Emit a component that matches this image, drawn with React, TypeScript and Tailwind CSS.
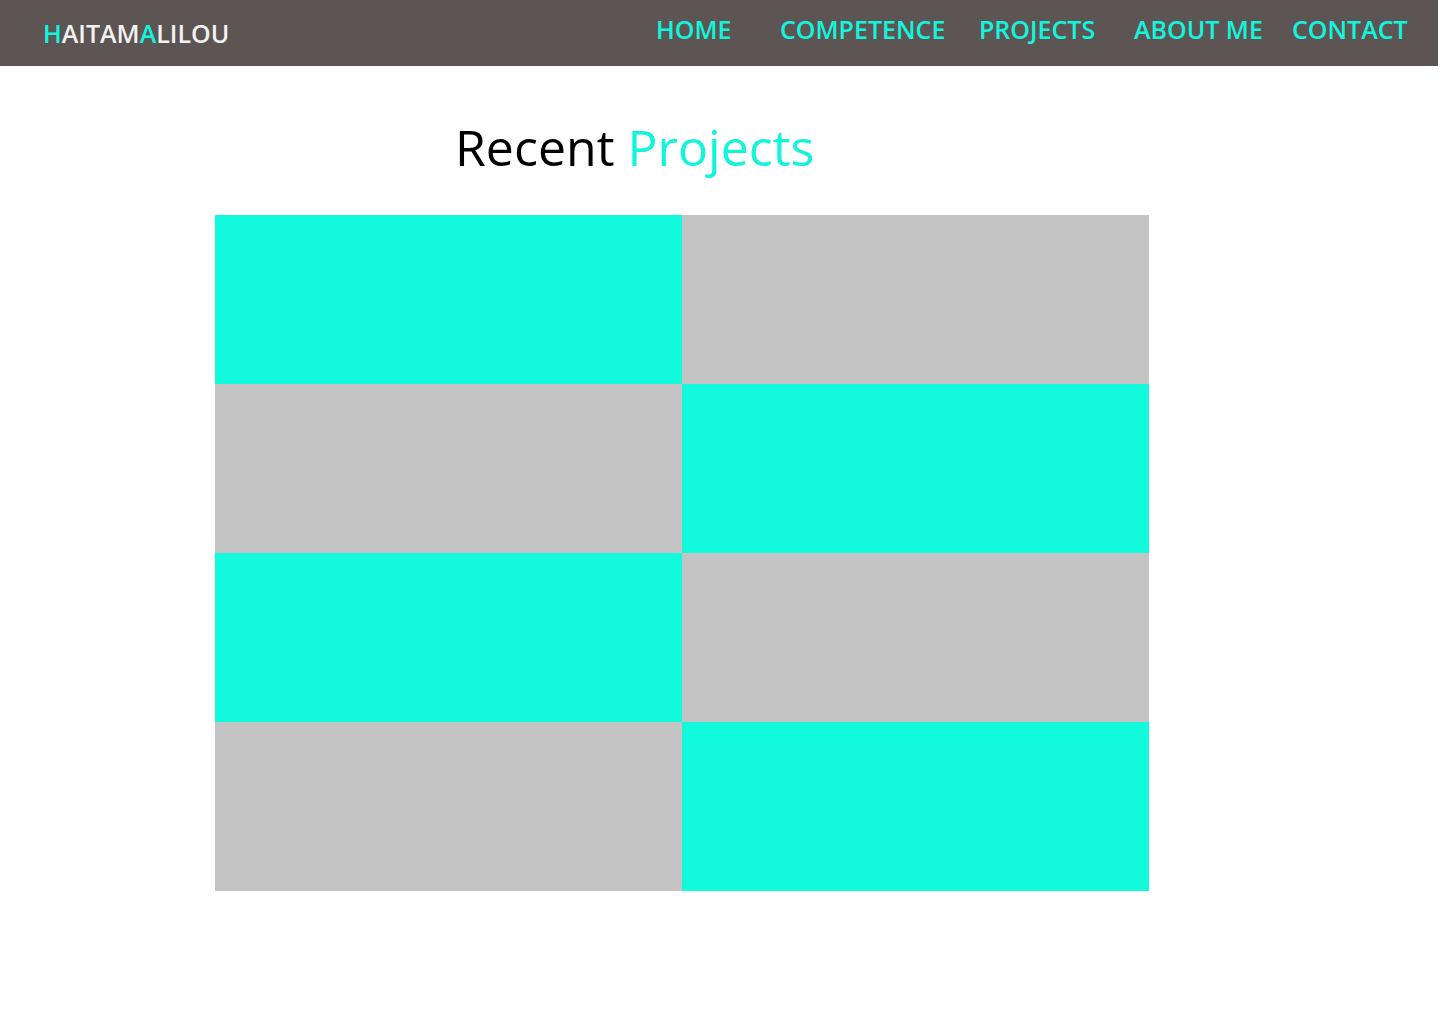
import React from 'react';

const links = [{
  name: 'HOME',
  width: 'w-[124px]'
}, {
  name: 'COMPETENCE',
  width: 'w-[199px]'
}, {
  name: 'PROJECTS',
  width: 'w-[155px]'
}, {
  name: 'ABOUT ME',
  width: 'w-[158px]'
}, {
  name: 'CONTACT',
  width: 'w-[116px]'
}];

const tiles = ['cyan', 'gray', 'gray', 'cyan', 'cyan', 'gray', 'gray', 'cyan'];

export default function App() {
  return <div className="min-h-[1024px] bg-white font-['Open_Sans',sans-serif]">
      <nav className="w-[1438px] h-[66px] bg-[#5d5554] flex items-start justify-between pl-[43px] pr-[30px]">
        <div className="pt-[16px] text-[25px] leading-[34px] font-semibold text-[#f2f2f2]">
          <span className="text-[#13f4dc]">H</span>AITAM<span className="text-[#13f4dc]">A</span>LILOU
        </div>
        <ul className="flex pt-[12px]">
          {links.map(link => <li key={link.name} className={`${link.width} text-[25px] leading-[34px] font-semibold text-[#13f4dc]`}>
              {link.name}
            </li>)}
        </ul>
      </nav>

      <section className="pt-[56px]">
        <h1 className="pl-[455px] text-[50px] leading-none font-normal text-black">
          Recent <span className="text-[#13f4dc]">Projects</span>
        </h1>
        <div className="ml-[215px] mt-[43px] w-[934px] grid grid-cols-2">
          {tiles.map((t, i) => <div key={i} className={`h-[169px] ${t === 'cyan' ? 'bg-[#13f9dc]' : 'bg-[#c4c4c4]'}`} />)}
        </div>
      </section>
    </div>;
}
